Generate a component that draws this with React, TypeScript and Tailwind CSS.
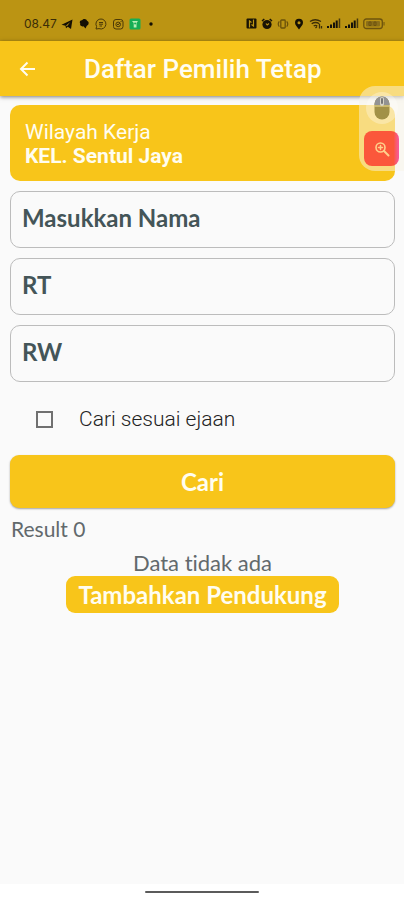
import { useState } from "react";

const fields = [
  { id: "nama", label: "Masukkan Nama" },
  { id: "rt", label: "RT" },
  { id: "rw", label: "RW" },
];

function Signal() {
  return (
    <svg viewBox="0 0 14 11" className="h-[11px] w-[14px]" fill="#15120a" aria-hidden="true">
      <rect x="0" y="8" width="2" height="2" />
      <rect x="3" y="6.500" width="2" height="3.500" />
      <rect x="6" y="4.500" width="2" height="5.500" />
      <rect x="8.700" y="2.500" width="2" height="7.500" />
      <rect x="11.700" y="0.500" width="1.500" height="9.500" opacity="0.7" />
    </svg>
  );
}

function StatusBar() {
  return (
    <div className="flex h-[41px] items-center justify-between bg-[#bb9413] pt-[6px] pr-[19px] pl-6 text-[#3a2d08]">
      <div className="flex items-center gap-[5px]">
        <span className="w-8 font-['Inter',sans-serif] text-xs leading-4">08.47</span>
        <svg viewBox="0 0 12 12" className="size-3" aria-hidden="true">
          <path d="M.5 6.800 11.500 1.500 10 11 6.800 8.700 5 10.300 4.500 7.800Z" fill="#151004" />
          <path d="M5 7.600 9.300 4 6 8.200Z" fill="#bb9413" />
        </svg>
        <svg viewBox="0 0 12 12" className="size-3" fill="#151004" aria-hidden="true">
          <path d="M4 2.200C6-.2 9 1.500 9 2.700 11.500 3.500 11 7 8.800 7.700L7.500 10.500 5.500 8.200C3 9 1.500 7 2.300 5.500 1 4 2.300 2 4 2.200Z" />
        </svg>
        <svg viewBox="0 0 12 12" className="size-3" fill="none" stroke="#4b3907" strokeWidth="1" aria-hidden="true">
          <path d="M1 11 1.600 8.500A5 5 0 1 1 4 10.600Z" />
          <path d="M4 4.500H8M4 6.200H8M4.500 8H7" />
        </svg>
        <svg viewBox="0 0 12 12" className="size-3" fill="none" stroke="#4b3907" strokeWidth="1" aria-hidden="true">
          <rect x="1.500" y="1.500" width="9.500" height="9.500" rx="2.500" />
          <circle cx="6.200" cy="6.400" r="2.300" />
          <path d="M8.600 3.500H9.500M5 6 6 7 7.800 5" />
        </svg>
        <svg viewBox="0 0 12 12" className="size-3" aria-hidden="true">
          <rect x="0.500" y="0.500" width="11" height="11" rx="1.500" fill="#16ad55" />
          <path d="M3 3H9L7.500 5V9.500H4.700V5Z" fill="#b6efb6" />
          <circle cx="6.100" cy="5.500" r="1" fill="#16ad55" />
        </svg>
        <svg viewBox="0 0 12 12" className="size-3" aria-hidden="true">
          <circle cx="5" cy="6" r="1.700" fill="#151004" />
        </svg>
      </div>
      <div className="flex items-center gap-1">
        <svg viewBox="0 0 11 11" className="size-[11px]" aria-hidden="true">
          <rect x="0.500" y="0.500" width="10" height="10" rx="1" fill="#191305" />
          <path d="M3.500 9.500V3L5.500 4.500M7.500 1.500V8L5.500 6.500" stroke="#bb9413" strokeWidth="1.200" fill="none" />
        </svg>
        <svg viewBox="0 0 12 12" className="size-3" aria-hidden="true">
          <circle cx="6" cy="6.500" r="4.600" fill="#191305" />
          <path d="M1 3 3.300 1M8.700 1 11 3" stroke="#191305" strokeWidth="1.500" />
          <path d="M5 5.500 6.200 7 8 5.500" stroke="#bb9413" strokeWidth="1.200" fill="none" />
        </svg>
        <svg viewBox="0 0 12 12" className="size-3" fill="none" stroke="#6a510a" aria-hidden="true">
          <rect x="3.800" y="2" width="4.400" height="8" rx="0.800" strokeWidth="1.300" />
          <path d="M2.300 3.300Q.2 6 2.300 8.700M9.700 3.300Q11.800 6 9.700 8.700" strokeWidth="1.200" />
        </svg>
        <svg viewBox="0 0 12 12" className="size-3" aria-hidden="true">
          <path d="M6 .8A4 4 0 0 1 10 4.800C10 7.200 7.600 9 6 11.500 4.400 9 2 7.200 2 4.800A4 4 0 0 1 6 .8Z" fill="#151004" />
          <circle cx="6" cy="4.700" r="1.500" fill="#bb9413" />
        </svg>
        <svg viewBox="0 0 14 12" className="h-3 w-[14px]" fill="none" stroke="#3c2e07" aria-hidden="true">
          <path d="M1 3.500Q6 0 12 3.500M2.700 5.800Q6.500 3.200 10.300 5.800M4.700 8Q6.500 6.700 8.300 8" strokeWidth="1.300" />
          <path d="M6.500 10 8 8.500M10.500 6V10.500M12.500 10.500V8" strokeWidth="1.300" />
        </svg>
        <Signal />
        <Signal />
        <svg viewBox="0 0 22 12" className="h-3 w-[22px]" fill="none" stroke="#6d530e" aria-hidden="true">
          <rect x="0.800" y="1" width="18.500" height="9.500" rx="2.500" strokeWidth="1.300" />
          <rect x="3" y="3" width="14" height="5.500" rx="1" fill="#8c6f18" stroke="none" />
          <path d="M6 4H8V7.500H6ZM11 4V7.500H13V4ZM21 4V7.500" strokeWidth="1" />
        </svg>
      </div>
    </div>
  );
}

function FloatingTools() {
  return (
    <div className="absolute top-[86px] right-0 flex h-[85px] w-[45px] flex-col items-center rounded-l-2xl bg-[#f7f4e5]/50 pt-[6px]">
      <button type="button" aria-label="Mouse" className="flex size-8 items-center justify-center rounded-full bg-white/30">
        <svg viewBox="0 0 16 24" className="h-6 w-4" aria-hidden="true">
          <rect x="0.500" y="0.500" width="15" height="23" rx="7.500" fill="#a29147" />
          <path d="M.5 9V8A7.500 7.500 0 0 1 15.500 8V9Z" fill="#939393" />
          <path d="M.5 10H15.500" stroke="#f3e298" strokeWidth="1" />
          <rect x="6" y="1" width="4" height="9" rx="2" fill="#d7d4c7" />
          <rect x="7" y="2" width="2" height="6" rx="1" fill="#777" />
        </svg>
      </button>
      <button type="button" aria-label="Zoom" className="mt-[7px] flex size-[35px] shrink-0 items-center justify-center rounded-lg bg-linear-to-r from-[#fb573b] from-85% to-[#f65a9f]">
        <svg viewBox="0 0 16 16" className="size-4" fill="none" stroke="#ffd08c" strokeLinecap="round" aria-hidden="true">
          <circle cx="6.500" cy="6.500" r="4.500" strokeWidth="1.600" />
          <path d="M10 10 14.500 14.500" strokeWidth="2" />
          <path d="M4.500 6.500H8.500M6.500 4.500V8.500" strokeWidth="1.500" />
        </svg>
      </button>
    </div>
  );
}

export default function App() {
  const [exact, setExact] = useState(false);
  return (
    <div className="relative flex min-h-screen flex-col bg-[#fafafa] font-['Lato',sans-serif] [font-variant-ligatures:none]">
      <StatusBar />
      <header className="flex h-[55px] items-center bg-[#f8c51a] px-[18px] text-[#fffdf0] shadow-[0_1px_4px_rgba(0,0,0,0.5)]">
        <button type="button" aria-label="Kembali" className="flex size-5 items-center justify-center">
          <svg viewBox="0 0 20 20" className="size-5" fill="none" stroke="currentColor" strokeWidth="2" aria-hidden="true">
            <path d="M17 10H3M9.500 3.500 3 10 9.500 16.500" />
          </svg>
        </button>
        <h1 className="ml-[46px] font-['Roboto',sans-serif] text-[26px] leading-8 font-medium">Daftar Pemilih Tetap</h1>
      </header>

      <main className="flex flex-1 flex-col pt-[9px] pr-[9px] pl-[10px]">
        <section className="rounded-[10px] bg-[#f8c51a] px-[15px] pt-[15px] pb-[13px] font-['Roboto',sans-serif] text-[21px] leading-6 text-[#fffdf0]">
          <p>Wilayah Kerja</p>
          <p className="font-bold">KEL. Sentul Jaya</p>
        </section>

        <form className="mt-[10px] flex flex-col" onSubmit={(e) => e.preventDefault()}>
          <div className="flex flex-col gap-[10px]">
            {fields.map((f) => (
              <input
                key={f.id}
                id={f.id}
                type="text"
                aria-label={f.label}
                placeholder={f.label}
                className="h-[57px] w-full rounded-[10px] border border-[#bcbcbc] bg-transparent px-[11px] pb-1 text-2xl font-bold text-[#445558] outline-none placeholder:text-[#445558] placeholder:opacity-100"
              />
            ))}
          </div>
          <label className="mt-[19px] mb-[18px] flex h-9 items-center gap-[26px] pl-[26px] font-['Roboto',sans-serif] text-[21px] leading-6 font-light text-[#222]">
            <input
              type="checkbox"
              checked={exact}
              onChange={(e) => setExact(e.target.checked)}
              className="size-[17px] appearance-none border-2 border-[#707070] bg-transparent checked:bg-[#f8c51a]"
            />
            Cari sesuai ejaan
          </label>
          <button type="submit" className="h-[53px] rounded-[9px] bg-[#f8c51a] text-2xl font-bold text-[#fffdf0] shadow-[0_1px_2px_rgba(0,0,0,0.35)]">
            Cari
          </button>
        </form>

        <p className="mt-[7px] pl-px text-[21px] leading-7 text-[#62696c]">Result 0</p>
        <div className="mt-[7px] flex flex-col items-center">
          <p className="text-[22px] leading-[26px] text-[#62696c]">Data tidak ada</p>
          <button type="button" className="h-[37px] rounded-[9px] bg-[#f8c51a] px-3 text-2xl leading-7 font-bold text-[#fffdf0]">
            Tambahkan Pendukung
          </button>
        </div>
      </main>

      <footer className="flex h-4 justify-center bg-white pt-[7px]">
        <div className="h-[2px] w-[114px] rounded-full bg-[#5b5b5b]" />
      </footer>
      <FloatingTools />
    </div>
  );
}
